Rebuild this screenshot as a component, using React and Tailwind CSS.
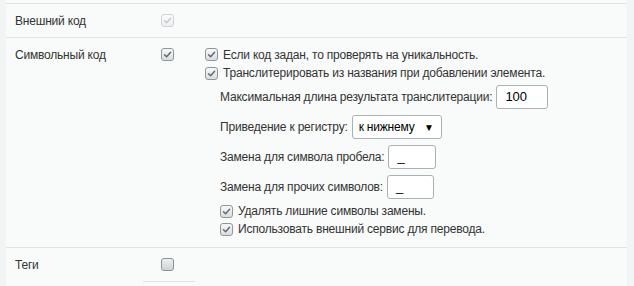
const Check = ({ checked = true, disabled = false }) => (
  <span
    className={
      'inline-flex items-center justify-center w-[13px] h-[13px] shrink-0 rounded-[3px] border ' +
      (disabled
        ? 'border-[#cfd4d6] bg-gradient-to-b from-[#fbfcfc] to-[#eceff0]'
        : checked
          ? 'border-[#8f979b] bg-gradient-to-b from-[#f7f8f8] to-[#d9dddf]'
          : 'border-[#8a9296] bg-gradient-to-b from-[#eef0f1] to-[#cfd3d5]')
    }
  >
    {checked && (
      <svg width="9" height="9" viewBox="0 0 9 9" fill="none">
        <path
          d="M1.5 4.8 L3.6 6.8 L7.6 2.2"
          stroke={disabled ? '#c2c7c9' : '#5f686d'}
          strokeWidth="1.4"
          strokeLinecap="round"
          strokeLinejoin="round"
        />
      </svg>
    )}
  </span>
);

const CheckLine = ({ children, h = 'h-[19px]' }) => (
  <div className={'flex items-center gap-[5px] ' + h}>
    <Check />
    <span>{children}</span>
  </div>
);

const Field = ({ label, children }) => (
  <div className="flex items-center h-[30px] gap-[4px]">
    <span>{label}</span>
    {children}
  </div>
);

const TextBox = ({ value, w }) => (
  <div className={'h-[24px] rounded-[3px] border border-[#a9b1b4] bg-white flex items-center px-[8px] text-[13px] tracking-normal text-[#000] ' + w}>
    {value}
  </div>
);

export default function App() {
  return (
    <div
      className="w-[634px] h-[286px] bg-[#f2f5f6] overflow-hidden text-[12px] tracking-[-0.2px] text-[#333]"
      style={{ fontFamily: '"Liberation Sans", Arial, sans-serif' }}
    >
      <div className="ml-[6px] w-[621px] h-full bg-[#f9fafa] pt-[3px]">
        <div className="flex items-center h-[35px] border-y border-[#dde2e4]">
          <div className="w-[155px] pl-[9px]">Внешний код</div>
          <Check disabled />
        </div>

        <div className="flex pt-[7px] h-[210px] border-b border-[#dde2e4]">
          <div className="w-[155px] pl-[9px] h-[19px] flex items-center">Символьный код</div>
          <div className="w-[44px] h-[19px] flex items-center">
            <Check />
          </div>
          <div className="flex flex-col">
            <CheckLine>Если код задан, то проверять на уникальность.</CheckLine>
            <CheckLine h="h-[18px]">Транслитерировать из названия при добавлении элемента.</CheckLine>
            <div className="pl-[15px] flex flex-col">
              <Field label="Максимальная длина результата транслитерации:">
                <TextBox value="100" w="w-[52px]" />
              </Field>
              <Field label="Приведение к регистру:">
                <div className="h-[24px] w-[90px] rounded-[3px] border border-[#a9b1b4] bg-white flex items-center justify-between pl-[6px] pr-[7px] text-[#000]">
                  <span>к нижнему</span>
                  <span className="text-[10px]">▼</span>
                </div>
              </Field>
              <Field label="Замена для символа пробела:">
                <TextBox value="_" w="w-[48px]" />
              </Field>
              <Field label="Замена для прочих символов:">
                <TextBox value="_" w="w-[47px]" />
              </Field>
              <CheckLine h="h-[18px]">Удалять лишние символы замены.</CheckLine>
              <CheckLine h="h-[18px]">Использовать внешний сервис для перевода.</CheckLine>
            </div>
          </div>
        </div>

        <div className="flex items-center h-[33px]">
          <div className="w-[155px] pl-[9px]">Теги</div>
          <Check checked={false} />
        </div>
        <div className="ml-[137px] w-[52px] h-px bg-[#dde2e4]" />
      </div>
    </div>
  );
}
